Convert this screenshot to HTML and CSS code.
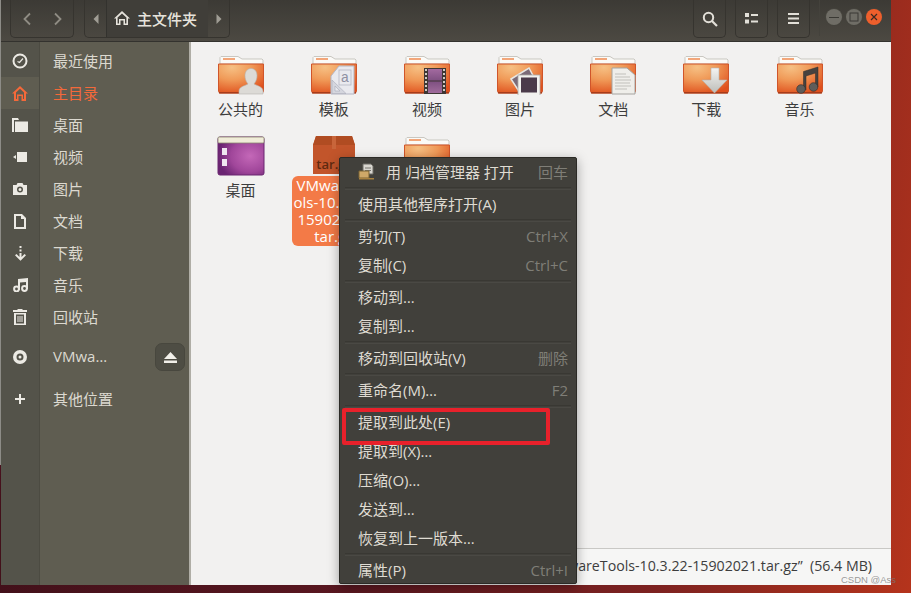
FILE: index.html
```html
<!DOCTYPE html>
<html lang="zh-CN">
<head>
    <meta charset="UTF-8">
    <title>主文件夹</title>
    <link rel="stylesheet" href="styles.css">
</head>
<body>
<svg class="defs" width="0" height="0">
    <defs>
        <radialGradient id="folderFill" cx="0.3" cy="0.12" r="0.95">
            <stop offset="0" stop-color="#f6c084"/>
            <stop offset="0.45" stop-color="#f09a58"/>
            <stop offset="1" stop-color="#df4f1c"/>
        </radialGradient>
        <radialGradient id="desktopFill" cx="0.7" cy="0.5" r="0.7">
            <stop offset="0" stop-color="#c468b8"/>
            <stop offset="0.6" stop-color="#a0469a"/>
            <stop offset="1" stop-color="#6a2472"/>
        </radialGradient>
        <linearGradient id="filmFill" x1="0" y1="0" x2="0" y2="1">
            <stop offset="0" stop-color="#a36aa0"/>
            <stop offset="0.5" stop-color="#7d4f80"/>
            <stop offset="1" stop-color="#a06c9c"/>
        </linearGradient>
        <linearGradient id="arrowFill" x1="0" y1="0" x2="0" y2="1">
            <stop offset="0" stop-color="#f4f4f2"/>
            <stop offset="1" stop-color="#bdbdb9"/>
        </linearGradient>
        <symbol id="folder" viewBox="0 0 48 40">
            <path d="M3 9V2.500L4 1.500H21L25 4H45L46 5V9Z" fill="#fbfaf7" stroke="#c9c7c1" stroke-width="1"/>
            <rect x="6" y="3" width="12" height="2" fill="#f2a67a"/>
            <path d="M1.500 9H46.500V36L45.500 38H2.500L1.500 36Z" fill="url(#folderFill)" stroke="#d0552a" stroke-width="1"/>
            <rect x="2" y="37" width="44" height="1.500" fill="#a83c1a"/>
        </symbol>
    </defs>
</svg>

<div class="window">
    <header class="toolbar">
        <div class="btn-group">
            <span class="tool-btn nav-btn">
                <svg width="10" height="14" viewBox="0 0 10 14"><path d="M8 1.500 2.500 7 8 12.500" fill="none" stroke="#8f8c84" stroke-width="1.800"/></svg>
            </span>
            <span class="tool-btn nav-btn">
                <svg width="10" height="14" viewBox="0 0 10 14"><path d="M2 1.500 7.500 7 2 12.500" fill="none" stroke="#8f8c84" stroke-width="1.800"/></svg>
            </span>
        </div>
        <div class="btn-group path-bar">
            <span class="path-arrow">
                <svg width="6" height="10" viewBox="0 0 6 10"><path d="M5.500 0V10L0.500 5Z" fill="#a09d95"/></svg>
            </span>
            <span class="path-current">
                <svg width="16" height="14" viewBox="0 0 16 14"><path d="M8 0 16 7.500H14V14H9.500V9.500H6.500V14H2V7.500H0Z M8 2.600 3.600 6.600V12.500H5V8H11V12.500H12.400V6.600Z" fill="#e6e3dc" fill-rule="evenodd"/></svg>
                主文件夹
            </span>
            <span class="path-arrow">
                <svg width="6" height="10" viewBox="0 0 6 10"><path d="M.5 0V10L5.500 5Z" fill="#a09d95"/></svg>
            </span>
        </div>
        <div class="toolbar-right">
            <span class="tool-btn square-btn">
                <svg width="16" height="16" viewBox="0 0 16 16"><circle cx="6.500" cy="6.500" r="4.700" fill="none" stroke="#e2dfd8" stroke-width="2"/><path d="M10 10 15 15" stroke="#e2dfd8" stroke-width="2.200"/></svg>
            </span>
            <span class="tool-btn square-btn">
                <svg width="13" height="11" viewBox="0 0 13 11"><path d="M0 0H4V4H0ZM6 1H13V3H6ZM0 6.500H4V10.500H0ZM6 7.500H13V9.500H6Z" fill="#e2dfd8"/></svg>
            </span>
            <span class="tool-btn square-btn">
                <svg width="11" height="11" viewBox="0 0 11 11"><path d="M0 0H11V2H0ZM0 4.500H11V6.500H0ZM0 9H11V11H0Z" fill="#e2dfd8"/></svg>
            </span>
            <span class="toolbar-sep"></span>
            <div class="win-controls">
                <span class="win-btn">
                    <svg width="16" height="16" viewBox="0 0 16 16"><path d="M3 8.500H13" stroke="#3a3934" stroke-width="1"/></svg>
                </span>
                <span class="win-btn">
                    <svg width="16" height="16" viewBox="0 0 16 16"><rect x="4" y="4" width="8" height="8" fill="none" stroke="#3a3934"/></svg>
                </span>
                <span class="win-btn win-close">
                    <svg width="16" height="16" viewBox="0 0 16 16"><path d="M5 5 11 11M11 5 5 11" stroke="#3a2a22" stroke-width="1.200"/></svg>
                </span>
            </div>
        </div>
    </header>

    <div class="main">
        <aside class="sidebar">
            <div class="side-row">
                <span class="side-icon"><svg width="16" height="16" viewBox="0 0 16 16"><circle cx="8" cy="8" r="6.500" fill="none" stroke="#eceae4" stroke-width="2"/><path d="M5.500 8.500 7.500 9.500 11 5.500" fill="none" stroke="#eceae4" stroke-width="1.200"/></svg></span>
                <span class="side-label">最近使用</span>
            </div>
            <div class="side-row active">
                <span class="side-icon"><svg width="16" height="15" viewBox="0 0 16 15"><path d="M8 0 16 7.500H14V15H9.500V10H6.500V15H2V7.500H0Z M8 2.800 4 6.500V13H5V8.500H11V13H12V6.500Z" fill="#f4693a" fill-rule="evenodd"/></svg></span>
                <span class="side-label">主目录</span>
            </div>
            <div class="side-row">
                <span class="side-icon"><svg width="16" height="14" viewBox="0 0 16 14"><path d="M0 0H6L7 2H2V14H0ZM3 3.500H16V14H3Z" fill="#eceae4"/></svg></span>
                <span class="side-label">桌面</span>
            </div>
            <div class="side-row">
                <span class="side-icon"><svg width="14" height="10" viewBox="0 0 14 10"><path d="M4 0H14V10H4ZM3 3V7L0 5Z" fill="#eceae4"/></svg></span>
                <span class="side-label">视频</span>
            </div>
            <div class="side-row">
                <span class="side-icon"><svg width="14" height="12" viewBox="0 0 14 12"><path d="M0 2H3.500L4.500 0H9.500L10.500 2H14V12H0ZM7 3.500A3 3 0 1 0 7 9.500 3 3 0 1 0 7 3.500ZM7 5A1.500 1.500 0 1 1 7 8 1.500 1.500 0 1 1 7 5Z" fill="#eceae4" fill-rule="evenodd"/></svg></span>
                <span class="side-label">图片</span>
            </div>
            <div class="side-row">
                <span class="side-icon"><svg width="12" height="15" viewBox="0 0 12 15"><path d="M0 0H8L12 4V15H0ZM2 2V13H10V5H7V2Z" fill="#eceae4" fill-rule="evenodd"/></svg></span>
                <span class="side-label">文档</span>
            </div>
            <div class="side-row">
                <span class="side-icon"><svg width="13" height="15" viewBox="0 0 13 15"><path d="M5.500 0H7.500V2H5.500ZM5.500 3.500H7.500V5.500H5.500ZM5.500 7H7.500V11L10.500 8 12 9.300 6.500 14.800 1 9.300 2.500 8 5.500 11Z" fill="#eceae4"/></svg></span>
                <span class="side-label">下载</span>
            </div>
            <div class="side-row">
                <span class="side-icon"><svg width="15" height="14" viewBox="0 0 15 14"><path d="M5 1 15 0V11H13V4L7 4.600V12H5Z" fill="#eceae4"/><circle cx="3.500" cy="11" r="2.400" fill="none" stroke="#eceae4" stroke-width="2"/><circle cx="11.500" cy="10.500" r="2.400" fill="none" stroke="#eceae4" stroke-width="2"/></svg></span>
                <span class="side-label">音乐</span>
            </div>
            <div class="side-row">
                <span class="side-icon"><svg width="14" height="16" viewBox="0 0 14 16"><path d="M4.500 0H9.500V1H14V3H0V1H4.500ZM1 4H13V16H1ZM3 5.500V14.500H11V5.500ZM4.500 7H5.500V13H4.500ZM6.500 7H7.500V13H6.500ZM8.500 7H9.500V13H8.500Z" fill="#eceae4" fill-rule="evenodd"/></svg></span>
                <span class="side-label">回收站</span>
            </div>
            <div class="side-row device-row">
                <span class="side-icon"><svg width="14" height="14" viewBox="0 0 14 14"><path d="M7 0A7 7 0 1 0 7 14 7 7 0 1 0 7 0ZM7 3.500A3.500 3.500 0 1 1 7 10.500 3.500 3.500 0 1 1 7 3.500ZM7 5.500A1.500 1.500 0 1 0 7 8.500 1.500 1.500 0 1 0 7 5.500Z" fill="#eceae4" fill-rule="evenodd"/></svg></span>
                <span class="side-label">VMwa…</span>
                <span class="eject-btn"><svg width="13" height="11" viewBox="0 0 13 11"><path d="M6.500 0 13 7H0ZM0 8.500H13V11H0Z" fill="#f2f0ea"/></svg></span>
            </div>
            <div class="side-row other-row">
                <span class="side-icon"><svg width="10" height="10" viewBox="0 0 10 10"><path d="M4 0H6V4H10V6H6V10H4V6H0V4H4Z" fill="#eceae4"/></svg></span>
                <span class="side-label">其他位置</span>
            </div>
        </aside>

        <section class="files">
            <div class="file-grid">
                <div class="tile">
                    <svg class="tile-icon" viewBox="0 0 48 40"><use href="#folder"/>
                        <path d="M22 39V36C22 32 27 31 31 29 28.500 26 28 23 28 20.500 28 16.500 30.500 13.500 34 13.500S40 16.500 40 20.500C40 23 39.500 26 37 29 41 31 46 32 46 36V39Z" fill="#dcdad6" stroke="#b5b3ae" stroke-width=".6"/>
                    </svg>
                    <span class="tile-name">公共的</span>
                </div>
                <div class="tile">
                    <svg class="tile-icon" viewBox="0 0 48 40"><use href="#folder"/>
                        <path d="M29 11H44V39H21V21Z" fill="#e9e9ee" stroke="#b4b6c4"/>
                        <rect x="29" y="15" width="12" height="15" fill="none" stroke="#b4b6c4" stroke-width=".8"/>
                        <text x="35" y="27" class="icon-letter">a</text>
                        <path d="M22 38.500 36 38.500 22 25Z M25 36H30L25 31Z" fill="#d5d6de" stroke="#a9abb9" stroke-width=".6" fill-rule="evenodd"/>
                    </svg>
                    <span class="tile-name">模板</span>
                </div>
                <div class="tile">
                    <svg class="tile-icon" viewBox="0 0 48 40"><use href="#folder"/>
                        <rect x="21" y="13" width="22" height="26" fill="#3e3734"/>
                        <rect x="25" y="14" width="14" height="24" fill="url(#filmFill)"/>
                        <path d="M25 26H39" stroke="#3e3734"/>
                        <path d="M22 15H24M22 19H24M22 23H24M22 27H24M22 31H24M22 35H24M40 15H42M40 19H42M40 23H42M40 27H42M40 31H42M40 35H42" stroke="#cfcac4" stroke-width="2"/>
                    </svg>
                    <span class="tile-name">视频</span>
                </div>
                <div class="tile">
                    <svg class="tile-icon" viewBox="0 0 48 40"><use href="#folder"/>
                        <path d="M15 24 33 13 41 28 24 38Z" fill="#7b6a78" stroke="#e8e6e2" stroke-width="1.500"/>
                        <rect x="22" y="20" width="22" height="21" fill="#f2f1ee" stroke="#aaa8a4" stroke-width=".8"/>
                        <rect x="25" y="22.500" width="16" height="15" fill="#4b3a4a"/>
                    </svg>
                    <span class="tile-name">图片</span>
                </div>
                <div class="tile">
                    <svg class="tile-icon" viewBox="0 0 48 40"><use href="#folder"/>
                        <path d="M23 13H38L46 20V39H23Z" fill="#efeeea" stroke="#a5a4a0"/>
                        <path d="M26 19H37M26 22H41M26 25H42M26 28H41M26 31H42M26 34H38" stroke="#c1c0bb"/>
                    </svg>
                    <span class="tile-name">文档</span>
                </div>
                <div class="tile">
                    <svg class="tile-icon" viewBox="0 0 48 40"><use href="#folder"/>
                        <path d="M29 13H37V25H45L32.500 38 20 25H29Z" fill="url(#arrowFill)" stroke="#b5b3ae" stroke-width=".6"/>
                    </svg>
                    <span class="tile-name">下载</span>
                </div>
                <div class="tile">
                    <svg class="tile-icon" viewBox="0 0 48 40"><use href="#folder"/>
                        <path d="M27.500 34V16.500L42 12V32H39.500V18L30 21V35Z" fill="#45423f" stroke="#2f2d2b" stroke-width=".5"/>
                        <circle cx="25" cy="34" r="4.300" fill="#5f5d5a" stroke="#2f2d2b" stroke-width=".6"/>
                        <circle cx="37.500" cy="32" r="4.300" fill="#5f5d5a" stroke="#2f2d2b" stroke-width=".6"/>
                    </svg>
                    <span class="tile-name">音乐</span>
                </div>
                <div class="tile">
                    <svg class="tile-icon" viewBox="0 -1 48 40">
                        <rect x="1" y="0" width="46" height="38" rx="2" fill="url(#desktopFill)" stroke="#6b2670"/>
                        <rect x="1" y="0" width="46" height="6" rx="1" fill="#f0ecd8" stroke="#8a8671" stroke-width=".8"/>
                        <rect x="5" y="11" width="5" height="7" fill="#efe6f0"/>
                        <rect x="5" y="22" width="5" height="7" fill="#efe6f0"/>
                    </svg>
                    <span class="tile-name">桌面</span>
                </div>
                <div class="tile selected">
                    <svg class="tile-icon" viewBox="0 0 48 40">
                        <path d="M3 9 6 0H42L45 9V38H3Z" fill="#c2552b"/>
                        <path d="M3 9H45L42 0H6Z" fill="#b04c22"/>
                        <rect x="22" y="0" width="4" height="13" fill="#c8653a"/>
                        <text x="24" y="33" class="icon-tar">tar.gz</text>
                    </svg>
                    <span class="tile-name">VMwareTo<br>ols-10.3.22-<br>15902021.<br>tar.gz</span>
                </div>
                <div class="tile">
                    <svg class="tile-icon" viewBox="0 0 48 40"><use href="#folder"/></svg>
                </div>
            </div>
            <div class="statusbar">“VMwareTools-10.3.22-15902021.tar.gz”&nbsp; (56.4 MB)</div>
        </section>
    </div>
</div>

<div class="context-menu">
    <div class="menu-item first">
        <span class="menu-text">
            <svg class="menu-app-icon" width="17" height="17" viewBox="0 0 17 17"><path d="M5 1H13L15 3V11H5Z" fill="#d9d7d0" stroke="#6f6d66"/><path d="M7 5H13M7 7.500H13" stroke="#77756e"/><path d="M1 8H11V15H1Z" fill="#cfa868" stroke="#7a6232"/><path d="M1 15H16V16.500H1Z" fill="#a8813f"/></svg>
            用 归档管理器 打开
        </span>
        <span class="accel">回车</span>
    </div>
    <div class="menu-sep"></div>
    <div class="menu-item"><span class="menu-text">使用其他程序打开(A)</span></div>
    <div class="menu-sep"></div>
    <div class="menu-item"><span class="menu-text">剪切(T)</span><span class="accel">Ctrl+X</span></div>
    <div class="menu-item"><span class="menu-text">复制(C)</span><span class="accel">Ctrl+C</span></div>
    <div class="menu-sep"></div>
    <div class="menu-item"><span class="menu-text">移动到…</span></div>
    <div class="menu-item"><span class="menu-text">复制到…</span></div>
    <div class="menu-sep"></div>
    <div class="menu-item"><span class="menu-text">移动到回收站(V)</span><span class="accel">删除</span></div>
    <div class="menu-sep"></div>
    <div class="menu-item"><span class="menu-text">重命名(M)…</span><span class="accel">F2</span></div>
    <div class="menu-sep"></div>
    <div class="menu-item"><span class="menu-text">提取到此处(E)</span></div>
    <div class="menu-item"><span class="menu-text">提取到(X)…</span></div>
    <div class="menu-item"><span class="menu-text">压缩(O)…</span></div>
    <div class="menu-item"><span class="menu-text">发送到…</span></div>
    <div class="menu-item"><span class="menu-text">恢复到上一版本…</span></div>
    <div class="menu-sep"></div>
    <div class="menu-item last"><span class="menu-text">属性(P)</span><span class="accel">Ctrl+I</span></div>
</div>

<div class="red-mark"></div>
<div class="watermark">CSDN @Ass</div>
</body>
</html>
```

FILE: styles.css
```css
html, body {
    height: 100%;
}

body {
    margin: 0;
    overflow: hidden;
    position: relative;
    font-family: "Open Sans", "Noto Sans CJK SC", sans-serif;
    font-size: 15px;
    background:
        linear-gradient(#8d8c87, #8d8c87) 0 0 / 1px 465px no-repeat,
        linear-gradient(100deg, #8a1a3e 0, #42101a 9%, #5a1720 45%, #7d2220 75%, #b5341c 100%);
}

.defs {
    position: absolute;
}

.window {
    width: 890px;
    height: 585px;
    margin-left: 1px;
    display: flex;
    flex-direction: column;
}

/* toolbar */
.toolbar {
    height: 42px;
    flex-shrink: 0;
    display: flex;
    align-items: flex-start;
    padding-left: 9px;
    box-sizing: border-box;
    background: linear-gradient(#3c3a35, #4c4942);
    border-bottom: 1px solid #33322e;
}

.btn-group {
    display: flex;
    height: 38px;
    box-sizing: border-box;
    border: 1px solid #36342f;
    border-top: none;
    border-radius: 0 0 5px 5px;
}

.nav-btn {
    width: 31px;
}

.tool-btn {
    display: flex;
    align-items: center;
    justify-content: center;
}

.path-bar {
    margin-left: 10px;
}

.path-arrow {
    width: 21px;
    display: flex;
    align-items: center;
    justify-content: center;
}

.path-current {
    width: 102px;
    box-sizing: border-box;
    display: flex;
    align-items: center;
    gap: 7px;
    padding-left: 7px;
    padding-bottom: 1px;
    color: #e6e3dc;
    font-weight: 500;
    background: #403e39;
    border-left: 1px solid #33322e;
}

.toolbar-right {
    margin-left: auto;
    display: flex;
    align-items: flex-start;
}

.square-btn {
    width: 33px;
    height: 38px;
    box-sizing: border-box;
    margin-right: 9px;
    border: 1px solid #36342f;
    border-top: none;
    border-radius: 0 0 5px 5px;
}

.toolbar-sep {
    width: 1px;
    height: 36px;
    background: #44423c;
}

.win-controls {
    display: flex;
    gap: 4px;
    margin: 9px 9px 0 6px;
}

.win-btn {
    width: 16px;
    height: 16px;
    border-radius: 50%;
    background: #6f6d66;
    box-shadow: 0 0 0 1px #45433d;
}

.win-close {
    background: #ee5f2c;
}

.win-btn svg {
    display: block;
}

/* sidebar */
.main {
    flex: 1;
    display: flex;
    min-height: 0;
}

.sidebar {
    width: 190px;
    flex-shrink: 0;
    padding-top: 3px;
    box-sizing: border-box;
    border-right: 2px solid #b0aea6;
    background: linear-gradient(to right, #54534a 38px, #4c4b42 38px, #4c4b42 39px, #5f5d51 39px);
    color: #dcd9d0;
}

.side-row {
    height: 32px;
    display: flex;
    align-items: center;
}

.side-icon {
    width: 38px;
    height: 100%;
    flex-shrink: 0;
    margin-right: 14px;
    display: flex;
    align-items: center;
    justify-content: center;
}

.side-label {
    padding-bottom: 2px;
}

.side-row.active .side-icon {
    background: #5f5d51;
}

.side-row.active .side-label {
    color: #f4693a;
}

.device-row {
    margin-top: 8px;
}

.other-row {
    margin-top: 10px;
}

.eject-btn {
    width: 30px;
    height: 28px;
    margin-left: auto;
    margin-right: 4px;
    box-sizing: border-box;
    display: flex;
    align-items: center;
    justify-content: center;
    background: #4e4d44;
    border: 1px solid #48473e;
    border-radius: 7px;
}

/* file area */
.files {
    flex: 1;
    position: relative;
    background: #f2f1f0;
}

.file-grid {
    display: grid;
    grid-template-columns: repeat(7, 93.170px);
    grid-auto-rows: 81px;
    padding: 13px 0 0 3px;
}

.tile {
    display: flex;
    flex-direction: column;
    align-items: center;
    text-align: center;
    color: #3d3d3d;
}

.tile-icon {
    width: 48px;
    height: 40px;
    flex-shrink: 0;
}

.tile-name {
    margin-top: 4px;
    line-height: 20px;
}

.tile.selected .tile-name {
    width: 84px;
    padding: 1px 0;
    margin-top: 0;
    line-height: 17px;
    background: #f37a47;
    color: #fff;
    border-radius: 6px;
    white-space: nowrap;
}

.icon-letter {
    font-family: "Liberation Mono", monospace;
    font-size: 14px;
    text-anchor: middle;
    fill: #8f91a3;
}

.icon-tar {
    font-family: "Open Sans", sans-serif;
    font-size: 13px;
    font-weight: 600;
    text-anchor: middle;
    fill: #5f2a10;
}

.statusbar {
    position: absolute;
    right: 0;
    bottom: 0;
    left: 287px;
    height: 37px;
    box-sizing: border-box;
    padding: 0 19px 2px 0;
    display: flex;
    align-items: center;
    justify-content: flex-end;
    font-size: 14.200px;
    line-height: 16px;
    background: #f6f6f5;
    border-top: 1px solid #c9c8c5;
    color: #3d3d3d;
    white-space: nowrap;
}

/* context menu */
.context-menu {
    position: absolute;
    left: 339px;
    top: 157px;
    width: 238px;
    box-sizing: border-box;
    background: #41403b;
    border: 1px solid #2b2a26;
    border-radius: 2px;
    color: #dfdbd2;
    box-shadow: 0 3px 12px rgba(0, 0, 0, 0.35);
}

.menu-item {
    height: 29px;
    box-sizing: border-box;
    padding: 0 8px 2px 18px;
    display: flex;
    align-items: center;
    justify-content: space-between;
}

.menu-item.last {
    height: 27px;
    padding-bottom: 0;
}

.menu-text {
    display: flex;
    align-items: center;
}

.menu-app-icon {
    margin-right: 11px;
}

.accel {
    color: #7f7e77;
}

.menu-sep {
    height: 3px;
    box-sizing: border-box;
    margin: 0 5px;
    border-top: 1px solid #393833;
    border-bottom: 1px solid #4a4944;
}

.red-mark {
    position: absolute;
    left: 342px;
    top: 408px;
    width: 208px;
    height: 37px;
    box-sizing: border-box;
    border: 4px solid #e8212b;
    border-radius: 2px;
}

.watermark {
    position: absolute;
    left: 841px;
    top: 574px;
    line-height: 11px;
    font-family: "Liberation Sans", sans-serif;
    font-size: 9.500px;
    color: rgba(120, 120, 120, 0.75);
}
```
